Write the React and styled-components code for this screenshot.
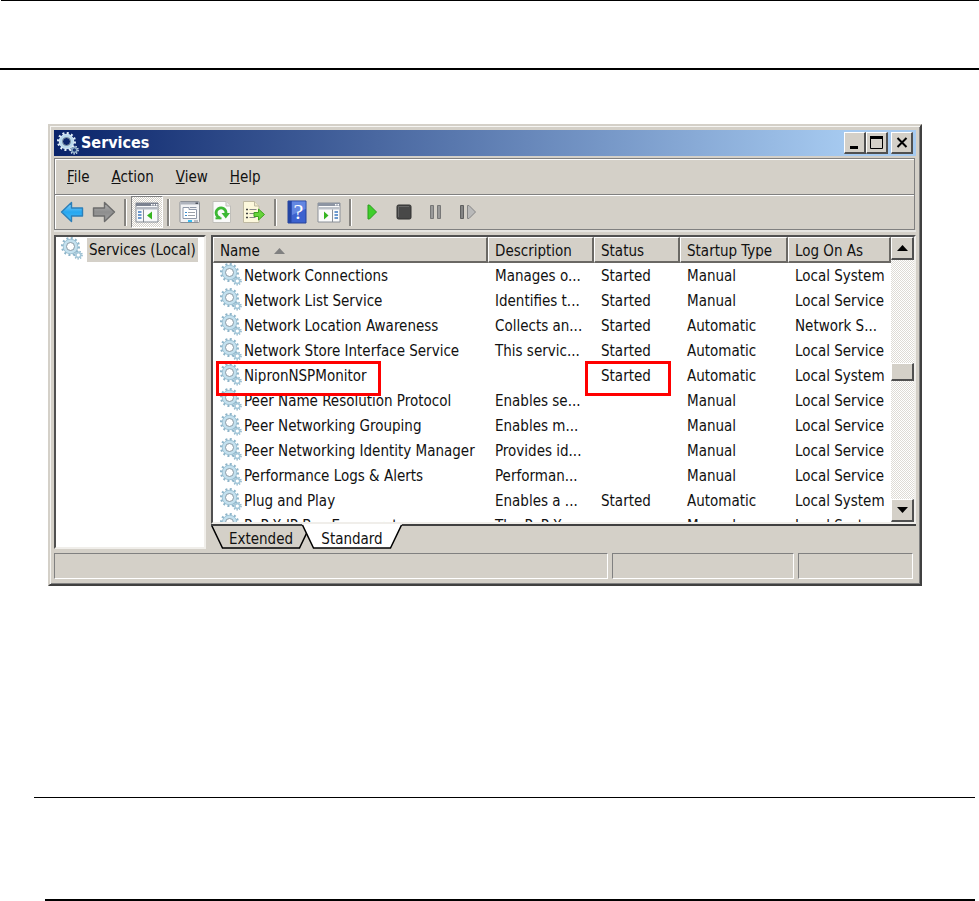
import React from 'react'
import styled, { createGlobalStyle } from 'styled-components';

const GlobalStyle = createGlobalStyle`
  * { box-sizing: border-box; }
  body {
    margin: 0;
    background: #fff;
    color: #111;
    font-family: "DejaVu Sans Condensed", "DejaVu Sans", sans-serif;
    font-size: 15px;
    line-height: 20px;
  }
  button {
    margin: 0;
    padding: 0;
    border: 0;
    background: none;
    color: inherit;
    font: inherit;
  }
  svg { display: block; flex: none; }
`

const Rule = styled.hr`
  margin: ${p => p.$margin || '0'};
  border: 0;
  height: ${p => p.$size || 1}px;
  background: #000;
`

const Window = styled.main`
  margin: 54px 57px 0 48px;
  padding: 4px;
  border: 2px solid;
  border-color: #d4d0c8 #404040 #404040 #d4d0c8;
  background: #d4d0c8;
  box-shadow: inset 1px 1px #f6f5f2, inset -1px -1px #808080;
`

const TitleBar = styled.header`
  display: flex;
  align-items: center;
  height: 26px;
  padding: 0 3px;
  background: linear-gradient(to right, #0a246a, #a6caf0 92%);
`
const Title = styled.h1`
  flex: 1;
  margin: 0 0 0 2px;
  color: #fff;
  font-size: 16px;
  line-height: 20px;
`
const TitleButton = styled.button`
  display: grid;
  place-items: center;
  width: 22px;
  height: 22px;
  margin-left: ${p => p.$gap || 0}px;
  border: solid;
  border-width: 1px 2px 2px 1px;
  border-color: #fff #505050 #505050 #fff;
  background: #d4d0c8;
`

const Bar = styled.div`
  display: flex;
  align-items: center;
  height: 36px;
  margin-right: 1px;
  padding-left: 1px;
  border: 1px solid #808080;
  border-bottom-width: ${p => (p.$last ? 1 : 0)}px;
  box-shadow: inset 1px 1px #fff;
`
const MenuBar = styled(Bar)`
  margin-top: 2px;
`
const MenuItem = styled.button`
  padding: 1px 11px 0;
`
const Tool = styled.button`
  display: grid;
  place-items: center;
  width: 32px;
  height: 32px;
  border: 1px solid;
  border-color: ${p => (p.$pressed ? '#808080 #fff #fff #808080' : 'transparent')};
  background: ${p => (p.$pressed ? 'repeating-conic-gradient(#fff 0 25%, #d4d0c8 0 50%) 0 0 / 2px 2px' : 'none')};
`
const ToolBar = styled(Bar)`
  padding-left: 1px;
`
const Divider = styled.span`
  width: 3px;
  height: 27px;
  margin: 0 4px;
  border-left: 2px solid #868480;
  border-right: 1px solid #fff;
`

const Panes = styled.div`
  display: flex;
  gap: 5px;
  padding-top: 5px;
  box-shadow: inset 0 2px #e6e5e1;
`
const Pane = styled.div`
  border: 2px solid;
  border-color: #505050 #f0eeea #f0eeea #505050;
  background: #fff;
`
const TreePane = styled(Pane)`
  width: 152px;
`
const TreeItem = styled.button`
  display: flex;
  height: 25px;
  padding-left: 5px;
`
const TreeLabel = styled.span`
  margin: 1px 0 0 4px;
  padding: 2px 2px 1px;
  background: #d4d0c8;
  white-space: nowrap;
`
const Main = styled.div`
  flex: 1;
  min-width: 0;
`
const ListPane = styled(Pane)`
  display: flex;
  height: 289px;
`
const ListView = styled.div`
  flex: 1;
  min-width: 0;
  overflow: hidden;
`
const Table = styled.table`
  width: 100%;
  table-layout: fixed;
  border-collapse: collapse;
`
const Col = styled.col`
  width: ${p => p.$width}px;
`
const HeadCell = styled.th`
  height: 26px;
  padding: 0;
  font-weight: normal;
`
const HeadButton = styled.button`
  display: flex;
  align-items: center;
  gap: 14px;
  width: 100%;
  height: 26px;
  padding: 2px 0 0 6px;
  border: solid;
  border-width: 1px 2px 2px 1px;
  border-color: #fff #6a6864 #6a6864 #fff;
  background: #d4d0c8;
  white-space: nowrap;
`
const Cell = styled.td`
  position: relative;
  height: 25px;
  padding: 0 0 0 7px;
  vertical-align: top;
  white-space: nowrap;
`
const NameBox = styled.span`
  display: flex;
  gap: 2px;
`
const CellText = styled.span`
  display: block;
  padding-top: 3px;
`
const Mark = styled.span`
  position: absolute;
  z-index: 1;
  top: -2px;
  left: ${p => p.$left}px;
  width: ${p => p.$width}px;
  height: 35px;
  border: 3px solid #f00;
  pointer-events: none;
`

const ScrollBar = styled.div`
  display: flex;
  flex-direction: column;
  width: 23px;
  background: repeating-conic-gradient(#fff 0 25%, #dedbd5 0 50%) 0 0 / 2px 2px;
`
const ScrollButton = styled.button`
  display: grid;
  place-items: center;
  height: ${p => p.$height || 23}px;
  border: solid;
  border-width: 1px 2px 2px 1px;
  border-color: #fff #505050 #505050 #fff;
  background: #d4d0c8;
`
const ScrollGap = styled.div`
  flex: ${p => p.$grow};
`

const Tabs = styled.div`
  display: flex;
  height: 25px;
  border-top: 2px solid #404040;
`
const Tab = styled.button`
  position: relative;
  z-index: ${p => (p.$active ? 1 : 0)};
  width: 100px;
  height: 25px;
  margin: -2px -9px 0 0;
  padding-top: 4px;
`
const TabShape = styled.svg`
  position: absolute;
  inset: 0;
  width: 100%;
  height: 100%;
`
const TabText = styled.span`
  position: relative;
`

const StatusBar = styled.footer`
  display: flex;
  gap: 4px;
  padding: 4px 3px 1px 0;
`
const StatusCell = styled.div`
  flex: ${p => (p.$width ? `0 0 ${p.$width}px` : '1')};
  height: 26px;
  border: 1px solid;
  border-color: #808080 #fff #fff #808080;
`

function Gear({ dark }) {
  const rim = dark ? '#e4f1fa' : '#8db4c9'
  const body = dark ? '#b9d9ec' : '#c3e0ee'
  return (
    <svg width="22" height="23" viewBox="0 1 22 23" fill="none">
      <circle cx="9.5" cy="10.5" r="8.3" stroke={rim} strokeWidth="2.4" strokeDasharray="2 2.346" />
      <circle cx="9.5" cy="10.5" r="5.8" stroke={body} strokeWidth="3.6" />
      <circle cx="9.5" cy="10.5" r="7.3" stroke={rim} strokeWidth="0.7" />
      <circle cx="9.5" cy="10.5" r="4" stroke="#8799a5" strokeWidth="1" />
      <circle cx="17.3" cy="19" r="3.7" stroke={rim} strokeWidth="1.6" strokeDasharray="1.3 1.283" />
      <circle cx="17.3" cy="19" r="2.4" stroke={dark ? '#89a9c4' : '#a5c8da'} strokeWidth="1.6" />
      <circle cx="17.3" cy="19" r="1.2" fill={dark ? '#1a3477' : '#fff'} />
    </svg>
  )
}

function Arrow({ left }) {
  return (
    <svg width="24" height="22" viewBox="0 0 24 22">
      <defs>
        <linearGradient id={left ? 'blueArrow' : 'grayArrow'} x2="0" y2="1">
          <stop offset="0" stopColor={left ? '#8fd6fb' : '#b5b5b5'} />
          <stop offset="0.5" stopColor={left ? '#27a7f0' : '#8e8e8e'} />
          <stop offset="1" stopColor={left ? '#46bdf5' : '#a2a2a2'} />
        </linearGradient>
      </defs>
      <path
        d={left ? 'M1.5 11 11.5 1.5V7h11v8h-11v5.5Z' : 'M22.5 11 12.5 1.5V7h-11v8h11v5.5Z'}
        fill={left ? 'url(#blueArrow)' : 'url(#grayArrow)'}
        stroke={left ? '#2b7fb9' : '#6c6c6c'}
        strokeWidth="1.4"
        strokeLinejoin="round"
      />
    </svg>
  )
}

function TreeIcon() {
  return (
    <svg width="24" height="22" viewBox="0 0 24 22">
      <path d="M1 2h22v19H1z" fill="#f8f9fa" stroke="#858b94" />
      <path d="M1 2h22v3H1z" fill="#7b8290" />
      <path d="M16 3h1.5v1.5H16zM18.5 3H20v1.5h-1.5zM21 3h1.5v1.5H21z" fill="#fff" />
      <path d="M1.5 6h21v2.500h-21z" fill="#b5bac3" />
      <path d="M8.5 8.5V21" stroke="#858b94" />
      <path d="M3 11h3.500M3 14h3.500M3 17h3.500" stroke="#3b78c0" strokeWidth="1.6" />
      <path d="M17 10.500v8l-5-4z" fill="#35b41f" />
    </svg>
  )
}

function PropertiesIcon() {
  return (
    <svg width="22" height="24" viewBox="0 0 22 24">
      <rect x="1" y="1.5" width="19.5" height="21" rx="1" fill="#f2f3f5" stroke="#8d9197" />
      <path d="M1.5 2h18.500v2.500H1.500z" fill="#aeb3bd" />
      <path d="M16.5 2.500h2.500v1.500h-2.500z" fill="#4c525c" />
      <path d="M4 7.500h6v2h7.500v9H4z" fill="#fff" stroke="#8f98a8" />
      <path d="M11 7.500h6.500" stroke="#8f98a8" />
      <path d="M6 12.500h2M6 15.500h2" stroke="#3c8dcb" strokeWidth="1.2" />
      <path d="M9 12.500h7M9 15.500h7" stroke="#9aa0a8" />
      <path d="M9 20h4v2H9z" fill="#37bdf0" />
      <path d="M15 20h4v2h-4z" fill="#b9bdc3" />
    </svg>
  )
}

function RefreshIcon() {
  return (
    <svg width="20" height="24" viewBox="0 0 20 24">
      <path d="M1 1.500h13l4.500 4.500v16.500H1z" fill="#fafafa" stroke="#c0bfba" />
      <path d="M14 1.500V6h4.500" fill="#e6e6e6" stroke="#c0bfba" />
      <path d="M8 18C3.500 16 3 11.500 6 9C9.500 6.500 14.500 8.500 14 14" fill="none" stroke="#3cb834" strokeWidth="2.8" />
      <path d="M9.500 13H18l-4.200 5.500z" fill="#3cb834" />
      <path d="M3.500 18.300h6" stroke="#3cb834" strokeWidth="2" />
    </svg>
  )
}

function ExportIcon() {
  return (
    <svg width="24" height="24" viewBox="0 0 24 24">
      <path d="M1.500 1.500h11l4.500 4.500v16.500H1.500z" fill="#fdf8dc" stroke="#bfb9a2" />
      <path d="M12.500 1.500V6H17" fill="#eee8cd" stroke="#bfb9a2" />
      <path d="M4 9.500h2M4 13.500h2M4 17.500h2" stroke="#444" strokeWidth="1.5" />
      <path d="M7.500 9.500h7M7.500 13.500h6M7.500 17.500h6" stroke="#888" />
      <path d="M12 12.500h4.500V9l6 5.500-6 5.500v-3.500H12z" fill="#67d43a" stroke="#3da120" />
    </svg>
  )
}

function HelpIcon() {
  return (
    <svg width="20" height="24" viewBox="0 0 20 24">
      <path d="M1 1h18v22H1z" fill="#3c62cf" stroke="#274399" />
      <path d="M1 1h3.500v22H1z" fill="#2445a4" />
      <path d="M5 1.500h13.500V9L5 15z" fill="#6387e2" />
      <text x="11.5" y="19" textAnchor="middle" fill="#fff" fontFamily="Liberation Serif, serif" fontSize="22">?</text>
    </svg>
  )
}

function ActionPaneIcon() {
  return (
    <svg width="24" height="22" viewBox="0 0 24 22">
      <path d="M1 2h22v19H1z" fill="#fbfbfb" stroke="#8b9098" />
      <path d="M1 2h22v3H1z" fill="#8d95a3" />
      <path d="M18 3h1.500v1.500H18zM20.500 3H22v1.500h-1.500z" fill="#fff" />
      <path d="M1.500 6h21v2.500h-21z" fill="#bcc1c9" />
      <path d="M15.500 8.500V21" stroke="#8b9098" />
      <path d="M7 10.500v8l4.500-4z" fill="#35b41f" />
      <path d="M17.500 11h3.500M17.500 14h3.500M17.500 17h3.500" stroke="#3b78c0" strokeWidth="1.6" />
    </svg>
  )
}

function PlayIcon() {
  return (
    <svg width="12" height="18" viewBox="0 0 12 18">
      <path d="M2 2v14h1.500L10.500 9 3.500 2z" fill="#3fcf2b" stroke="#2a9c1c" strokeLinejoin="round" />
    </svg>
  )
}

function StopIcon() {
  return (
    <svg width="16" height="16" viewBox="0 0 16 16">
      <rect x="1" y="1" width="14" height="14" rx="1.5" fill="#484848" stroke="#303030" />
      <path d="M2.500 13V2.500H13" fill="none" stroke="#666" />
    </svg>
  )
}

function PauseIcon() {
  return (
    <svg width="14" height="16" viewBox="0 0 14 16">
      <path d="M1.500 1.500h3v13h-3zM8.500 1.500h3v13h-3z" fill="#9a9a9a" stroke="#777" />
    </svg>
  )
}

function RestartIcon() {
  return (
    <svg width="18" height="16" viewBox="0 0 18 16">
      <path d="M1.500 1.500h3v13h-3z" fill="#858585" stroke="#606060" />
      <path d="M8.500 1.500v13h1.500L16.500 8 10 1.500z" fill="#b9b9b9" stroke="#858585" strokeLinejoin="round" />
    </svg>
  )
}

function Triangle({ down, gray }) {
  return (
    <svg width="11" height="6" viewBox="0 0 11 6">
      <path d={down ? 'M0 0h11L5.500 6z' : 'M0 6h11L5.500 0z'} fill={gray ? '#808080' : '#000'} />
    </svg>
  )
}

const services = [
  ['Network Connections', 'Manages o...', 'Started', 'Manual', 'Local System'],
  ['Network List Service', 'Identifies t...', 'Started', 'Manual', 'Local Service'],
  ['Network Location Awareness', 'Collects an...', 'Started', 'Automatic', 'Network S...'],
  ['Network Store Interface Service', 'This servic...', 'Started', 'Automatic', 'Local Service'],
  ['NipronNSPMonitor', '', 'Started', 'Automatic', 'Local System'],
  ['Peer Name Resolution Protocol', 'Enables se...', '', 'Manual', 'Local Service'],
  ['Peer Networking Grouping', 'Enables m...', '', 'Manual', 'Local Service'],
  ['Peer Networking Identity Manager', 'Provides id...', '', 'Manual', 'Local Service'],
  ['Performance Logs & Alerts', 'Performan...', '', 'Manual', 'Local Service'],
  ['Plug and Play', 'Enables a ...', 'Started', 'Automatic', 'Local System'],
  ['PnP-X IP Bus Enumerator', 'The PnP-X ...', '', 'Manual', 'Local System'],
]

const menus = ['File', 'Action', 'View', 'Help']
const columns = ['Name', 'Description', 'Status', 'Startup Type', 'Log On As']

function ServiceRow({ service }) {
  const [name, description, status, startup, logOn] = service
  const marked = name === 'NipronNSPMonitor'
  return (
    <tr>
      <Cell>
        <NameBox><Gear /><CellText>{name}</CellText></NameBox>
        {marked && <Mark $left={3} $width={165} />}
      </Cell>
      <Cell><CellText>{description}</CellText></Cell>
      <Cell>
        <CellText>{status}</CellText>
        {marked && <Mark $left={-9} $width={86} />}
      </Cell>
      <Cell><CellText>{startup}</CellText></Cell>
      <Cell><CellText>{logOn}</CellText></Cell>
    </tr>
  )
}

function ServiceTab({ active, children }) {
  return (
    <Tab type="button" role="tab" aria-selected={!!active} $active={active}>
      <TabShape viewBox="0 0 100 25" preserveAspectRatio="none">
        <path d="M0 0 11 24H89L100 0z" fill={active ? '#fff' : '#d4d0c8'} />
        <path d="M0.500 1 11.500 24H88.500L99.500 1" fill="none" stroke="#000" strokeWidth="1.5" />
        {!active && <path d="M0 1h100" stroke="#404040" strokeWidth="2" />}
      </TabShape>
      <TabText>{children}</TabText>
    </Tab>
  )
}

function App() {
  return (
    <>
      <GlobalStyle />
      <Rule $margin="0 0 0 1px" />
      <Rule $size={2} $margin="67px 0 0" />
      <Window>
        <TitleBar>
          <Gear dark />
          <Title>Services</Title>
          <TitleButton type="button" aria-label="Minimize">
            <svg width="12" height="12"><path d="M1 9h8v3H1z" /></svg>
          </TitleButton>
          <TitleButton type="button" aria-label="Maximize">
            <svg width="13" height="13"><path d="M.5 1.500h12v11H.5z" fill="none" stroke="#000" /><path d="M0 0h13v3H0z" /></svg>
          </TitleButton>
          <TitleButton type="button" aria-label="Close" $gap={3}>
            <svg width="12" height="11"><path d="M1.500 1 10.500 10M10.500 1 1.500 10" stroke="#000" strokeWidth="2" /></svg>
          </TitleButton>
        </TitleBar>

        <MenuBar as="nav">
          {menus.map(menu => (
            <MenuItem type="button" key={menu}><u>{menu[0]}</u>{menu.slice(1)}</MenuItem>
          ))}
        </MenuBar>
        <ToolBar $last>
          <Tool type="button" aria-label="Back"><Arrow left /></Tool>
          <Tool type="button" aria-label="Forward"><Arrow /></Tool>
          <Divider />
          <Tool type="button" aria-label="Show console tree" $pressed><TreeIcon /></Tool>
          <Divider />
          <Tool type="button" aria-label="Properties"><PropertiesIcon /></Tool>
          <Tool type="button" aria-label="Refresh"><RefreshIcon /></Tool>
          <Tool type="button" aria-label="Export list"><ExportIcon /></Tool>
          <Divider />
          <Tool type="button" aria-label="Help"><HelpIcon /></Tool>
          <Tool type="button" aria-label="Show action pane"><ActionPaneIcon /></Tool>
          <Divider />
          <Tool type="button" aria-label="Start service"><PlayIcon /></Tool>
          <Tool type="button" aria-label="Stop service"><StopIcon /></Tool>
          <Tool type="button" aria-label="Pause service"><PauseIcon /></Tool>
          <Tool type="button" aria-label="Restart service"><RestartIcon /></Tool>
        </ToolBar>

        <Panes>
          <TreePane>
            <TreeItem type="button">
              <Gear />
              <TreeLabel>Services (Local)</TreeLabel>
            </TreeItem>
          </TreePane>
          <Main>
            <ListPane>
              <ListView>
                <Table>
                  <colgroup>
                    <col />
                    <Col $width={106} />
                    <Col $width={86} />
                    <Col $width={108} />
                    <Col $width={103} />
                  </colgroup>
                  <thead>
                    <tr>
                      {columns.map((column, i) => (
                        <HeadCell key={column} scope="col">
                          <HeadButton type="button">{column}{i === 0 && <Triangle gray />}</HeadButton>
                        </HeadCell>
                      ))}
                    </tr>
                  </thead>
                  <tbody>
                    {services.map(service => <ServiceRow key={service[0]} service={service} />)}
                  </tbody>
                </Table>
              </ListView>
              <ScrollBar>
                <ScrollButton type="button" aria-label="Scroll up"><Triangle /></ScrollButton>
                <ScrollGap $grow={103} />
                <ScrollButton type="button" aria-label="Scroll position" $height={18} />
                <ScrollGap $grow={118} />
                <ScrollButton type="button" aria-label="Scroll down"><Triangle down /></ScrollButton>
              </ScrollBar>
            </ListPane>
            <Tabs role="tablist">
              <ServiceTab>Extended</ServiceTab>
              <ServiceTab active>Standard</ServiceTab>
            </Tabs>
          </Main>
        </Panes>

        <StatusBar>
          <StatusCell />
          <StatusCell $width={182} />
          <StatusCell $width={115} />
        </StatusBar>
      </Window>
      <Rule $margin="211px 4px 0 34px" />
      <Rule $size={2} $margin="101px 4px 0 45px" />
    </>
  )
}

export default App
